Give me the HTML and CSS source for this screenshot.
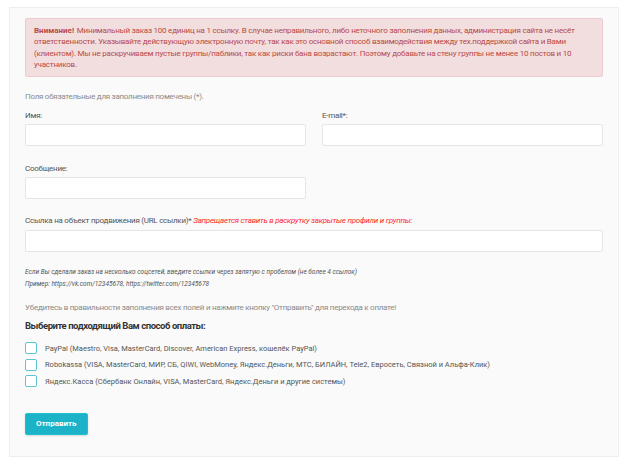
FILE: index.html
```html
<!DOCTYPE html>
<html lang="ru">
<head>
    <meta charset="UTF-8">
    <meta name="viewport" content="width=device-width, initial-scale=1.0">
    <title>Оформление заказа</title>
    <link rel="stylesheet" href="styles.css">
</head>
<body>
    <div class="order-panel">
        <div class="alert">
            <b>Внимание!</b> Минимальный заказ 100 единиц на 1 ссылку. В случае неправильного, либо неточного заполнения данных, администрация сайта не несёт ответственности. Указывайте действующую электронную почту, так как это основной способ взаимодействия между тех.поддержкой сайта и Вами (клиентом). Мы не раскручиваем пустые группы/паблики, так как риски бана возрастают. Поэтому добавьте на стену группы не менее 10 постов и 10 участников.
        </div>

        <p class="hint">Поля обязательные для заполнения помечены (*).</p>

        <div class="row">
            <div class="field">
                <label for="name">Имя:</label>
                <input type="text" id="name">
            </div>
            <div class="field">
                <label for="email">E-mail*:</label>
                <input type="text" id="email">
            </div>
        </div>

        <div class="row">
            <div class="field">
                <label for="message">Сообщение:</label>
                <input type="text" id="message">
            </div>
            <div class="field"></div>
        </div>

        <div class="field wide">
            <label for="url">Ссылка на объект продвижения (URL ссылки)* <em class="warn">Запрещается ставить в раскрутку закрытые профили и группы:</em></label>
            <input type="text" id="url">
        </div>

        <div class="notes">
            <p>Если Вы сделали заказ на несколько соцсетей, введите ссылки через запятую с пробелом (не более 4 ссылок)</p>
            <p>Пример: https://vk.com/12345678, https://twitter.com/12345678</p>
        </div>

        <p class="hint">Убедитесь в правильности заполнения всех полей и нажмите кнопку "Отправить" для перехода к оплате!</p>

        <h3>Выберите подходящий Вам способ оплаты:</h3>

        <ul class="payments">
            <li><span class="check"></span>PayPal (Maestro, Visa, MasterCard, Discover, American Express, кошелёк PayPal)</li>
            <li><span class="check"></span>Robokassa (VISA, MasterCard, МИР, СБ, QIWI, WebMoney, Яндекс.Деньги, МТС, БИЛАЙН, Tele2, Евросеть, Связной и Альфа-Клик)</li>
            <li><span class="check"></span>Яндекс.Касса (Сбербанк Онлайн, VISA, MasterCard, Яндекс.Деньги и другие системы)</li>
        </ul>

        <button type="button">Отправить</button>
    </div>
</body>
</html>
```

FILE: styles.css
```css
body {
    font-family: Roboto, 'Liberation Sans', Arial, sans-serif;
    background-color: #ffffff;
    color: #555;
    margin: 0;
    padding: 7px 9px;
}

.order-panel {
    width: 610px;
    box-sizing: border-box;
    background-color: #fafafa;
    border: 1px solid #eeeeee;
    padding: 10px 15px 21px;
}

.alert {
    background-color: #f2dede;
    border: 1px solid #ebccd1;
    border-radius: 2px;
    color: #b94a48;
    font-size: 8px;
    line-height: 11.3px;
    letter-spacing: -0.22px;
    padding: 6px 8px;
}

.alert b {
    letter-spacing: 0;
    margin-right: 1px;
}

.hint {
    color: #8a8a8a;
    font-size: 8px;
    letter-spacing: -0.27px;
    margin: 15px 0 0;
}

.row {
    display: flex;
    gap: 16px;
}

.field {
    flex: 1;
}

.field label {
    display: block;
    font-size: 8px;
    letter-spacing: -0.25px;
    color: #555;
    margin: 10px 0 4px;
}

.row + .row .field label {
    margin-top: 18px;
}

.field.wide label {
    margin: 17px 0 5px;
}

.warn {
    color: #ff2a2a;
}

input[type="text"] {
    display: block;
    width: 100%;
    height: 22px;
    box-sizing: border-box;
    border: 1px solid #e6e6e6;
    border-radius: 2px;
    background-color: #ffffff;
}

.notes {
    margin-top: 14px;
}

.notes p {
    margin: 0;
    font-size: 6.5px;
    line-height: 12px;
    font-style: italic;
    color: #555;
}

.notes + .hint {
    margin-top: 13px;
}

h3 {
    font-size: 9.5px;
    font-weight: bold;
    letter-spacing: -0.45px;
    color: #333;
    margin: 8px 0 9px;
}

.payments {
    list-style: none;
    margin: 0;
    padding: 0;
}

.payments li {
    display: flex;
    align-items: center;
    gap: 8px;
    font-size: 7.5px;
    color: #555;
    height: 16.5px;
}

.check {
    width: 10px;
    height: 10px;
    border: 1.5px solid #5cc6d4;
    border-radius: 2px;
    background-color: #ffffff;
}

button {
    margin-top: 23px;
    padding: 0 10px;
    height: 22px;
    background-color: #1cb3c8;
    border: 1px solid #22bfd3;
    border-radius: 2px;
    color: #ffffff;
    font-family: inherit;
    font-size: 8px;
    font-weight: bold;
    box-shadow: 0 1px 2px rgba(0, 0, 0, 0.15);
}
```
